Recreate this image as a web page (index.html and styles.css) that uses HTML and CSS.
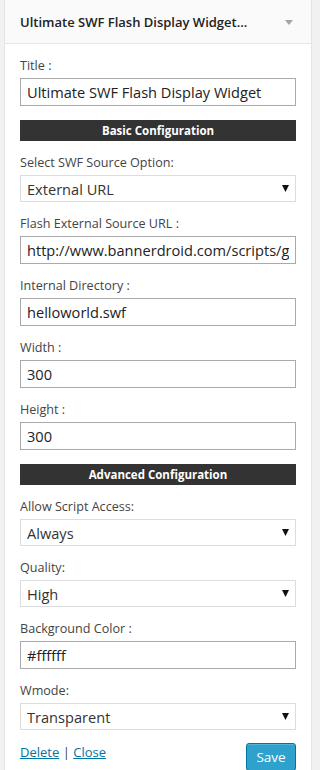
FILE: index.html
```html
<!DOCTYPE html>
<html>
<head>
<meta charset="utf-8">
<link rel="stylesheet" href="styles.css">
</head>
<body>
<div class="widget">
  <div class="widget-top">
    <span class="widget-title">Ultimate SWF Flash Display Widget...</span>
    <svg class="top-arrow" width="8" height="5" viewBox="0 0 8 5"><polygon points="0,0 8,0 4,5" fill="#a0a5aa"/></svg>
  </div>
  <div class="widget-inside">
    <div class="field">
      <label>Title :</label>
      <input class="text" type="text" value="Ultimate SWF Flash Display Widget">
    </div>
    <div class="section-bar">Basic Configuration</div>
    <div class="field">
      <label>Select SWF Source Option:</label>
      <div class="select-wrap">
        <select><option>External URL</option></select>
        <svg class="sel-arrow" width="7" height="7" viewBox="0 0 7 7"><polygon points="0,0 7,0 3.5,7" fill="#111"/></svg>
      </div>
    </div>
    <div class="field">
      <label>Flash External Source URL :</label>
      <input class="text" type="text" value="http://www.bannerdroid.com/scripts/generate.swf">
    </div>
    <div class="field">
      <label>Internal Directory :</label>
      <input class="text" type="text" value="helloworld.swf">
    </div>
    <div class="field">
      <label>Width :</label>
      <input class="text" type="text" value="300">
    </div>
    <div class="field">
      <label>Height :</label>
      <input class="text" type="text" value="300">
    </div>
    <div class="section-bar">Advanced Configuration</div>
    <div class="field">
      <label>Allow Script Access:</label>
      <div class="select-wrap">
        <select><option>Always</option></select>
        <svg class="sel-arrow" width="7" height="7" viewBox="0 0 7 7"><polygon points="0,0 7,0 3.5,7" fill="#111"/></svg>
      </div>
    </div>
    <div class="field">
      <label>Quality:</label>
      <div class="select-wrap">
        <select><option>High</option></select>
        <svg class="sel-arrow" width="7" height="7" viewBox="0 0 7 7"><polygon points="0,0 7,0 3.5,7" fill="#111"/></svg>
      </div>
    </div>
    <div class="field">
      <label>Background Color :</label>
      <input class="text" type="text" value="#ffffff">
    </div>
    <div class="field">
      <label>Wmode:</label>
      <div class="select-wrap">
        <select><option>Transparent</option></select>
        <svg class="sel-arrow" width="7" height="7" viewBox="0 0 7 7"><polygon points="0,0 7,0 3.5,7" fill="#111"/></svg>
      </div>
    </div>
    <div class="actions">
      <div class="links"><a href="#">Delete</a> <span class="sep">|</span> <a href="#">Close</a></div>
      <button class="save">Save</button>
    </div>
  </div>
</div>
</body>
</html>
```

FILE: styles.css
```css
* { box-sizing: border-box; }
html, body { margin: 0; padding: 0; background: #f1f1f1; }
body {
  font-family: "Open Sans", "Noto Sans", sans-serif;
  font-size: 13px;
  color: #444;
  height: 770px;
  overflow: hidden;
}
.widget {
  margin-left: 4px;
  width: 308px;
  border: 1px solid #e5e5e5;
  border-top: none;
  background: #fff;
  min-height: 800px;
}
.widget-top {
  height: 44px;
  background: #fafafa;
  border-bottom: 1px solid #e5e5e5;
  display: flex;
  align-items: center;
  justify-content: space-between;
  padding: 0 18px 0 15px;
}
.widget-title {
  font-weight: 600;
  font-size: 13px;
  color: #222;
  white-space: nowrap;
  overflow: hidden;
  text-overflow: ellipsis;
}
.top-arrow { flex: none; margin-top: 2px; }
.widget-inside { padding: 0 15px; }
.field { margin-top: 12px; }
.field label {
  display: block;
  line-height: 20px;
  margin-bottom: 2px;
  font-size: 12.6px;
  color: #444;
}
input.text {
  display: block;
  width: 100%;
  height: 28px;
  border: 1px solid #aaa;
  padding: 0 6px;
  font-family: "Open Sans", "Noto Sans", sans-serif;
  font-size: 14.6px;
  color: #222;
  background: #fff;
  outline: none;
  margin: 0;
}
.select-wrap { position: relative; }
.select-wrap select {
  display: block;
  width: 100%;
  height: 27px;
  border: 1px solid #ddd;
  padding: 0 6px;
  font-family: "Open Sans", "Noto Sans", sans-serif;
  font-size: 14.6px;
  color: #333;
  background: #fff;
  appearance: none;
  -webkit-appearance: none;
  border-radius: 0;
  margin: 0;
  outline: none;
}
.sel-arrow {
  position: absolute;
  right: 7px;
  top: 10px;
}
.section-bar {
  margin-top: 14px;
  height: 21px;
  line-height: 21px;
  background: #333;
  color: #fff;
  text-align: center;
  font-weight: 700;
  font-size: 11.5px;
}
.actions {
  display: flex;
  justify-content: space-between;
  align-items: flex-start;
  margin-top: 13px;
}
.links { line-height: 18px; }
.links a { color: #0074a2; text-decoration: underline; }
.links .sep { color: #444; }
.save {
  width: 50px;
  height: 28px;
  background: #2ea2cc;
  border: 1px solid #0074a2;
  border-radius: 3px;
  color: #fff;
  font-family: "Open Sans", "Noto Sans", sans-serif;
  font-size: 13.5px;
  padding: 0;
  box-shadow: inset 0 1px 0 rgba(120,200,230,.5);
}
```
